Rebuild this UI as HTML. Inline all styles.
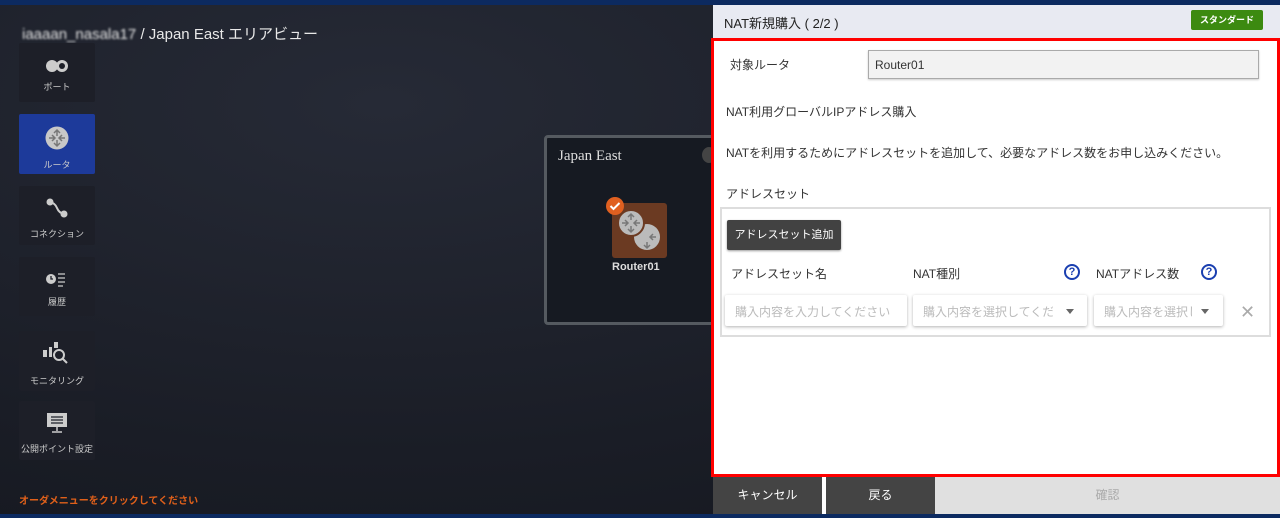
<!DOCTYPE html>
<html><head><meta charset="utf-8"><style>
*{box-sizing:border-box;margin:0;padding:0}
body{width:1280px;height:518px;overflow:hidden;font-family:"Liberation Sans","Noto Sans CJK JP",sans-serif;background:radial-gradient(ellipse at 30% 20%,#262a36,#1a1d26 60%,#13161d);position:relative}
.abs{position:absolute}
.tile{position:absolute;left:19px;width:76px;background:#1d1f28;border-radius:2px;color:#ccc;font-size:9px;text-align:center}
.tile span{position:absolute;left:0;right:0}
.lbl{font-size:12px;color:#333}
.inp{position:absolute;height:31px;background:#fff;box-shadow:0 1px 3px rgba(0,0,0,.3);border-radius:2px;color:#bbb;font-size:12px;padding:8px 10px;white-space:nowrap;overflow:hidden}
.inp i{font-style:normal;display:block;overflow:hidden}
.q{position:absolute;width:16px;height:16px;border:2px solid #1a3fb0;border-radius:50%;color:#1a3fb0;font-size:11px;font-weight:bold;text-align:center;line-height:12px}
.arr{position:absolute;width:0;height:0;border-left:4px solid transparent;border-right:4px solid transparent;border-top:5px solid #666}
</style></head><body>
<div class="abs" style="left:0;top:0;width:1280px;height:5px;background:#0c2a60"></div>
<div class="abs" style="left:0;top:514px;width:1280px;height:4px;background:#0c2a60"></div>
<div class="abs" style="left:22px;top:23px;color:#e8e8e8;font-size:15px;"><span style="filter:blur(1px)">iaaaan_nasala17</span> / Japan East エリアビュー</div>

<div class="tile" style="top:43px;height:59px"><svg class="abs" style="left:26px;top:16px" width="24" height="14"><circle cx="7" cy="7" r="6" fill="#ccc"/><circle cx="17" cy="7" r="6" fill="#ccc"/><circle cx="17" cy="7" r="3" fill="#1d1f28"/></svg><span style="top:37px">ポート</span></div>
<div class="tile" style="top:114px;height:60px;background:#1d3a9a"><svg class="abs" style="left:26px;top:12px" width="24" height="24"><circle cx="12" cy="12" r="11.5" fill="#c8c8c8"/><path d="M12 4v6M9 7l3-3 3 3M12 20v-6M9 17l3 3 3-3M4 12h6M7 9l3 3-3 3M20 12h-6M17 9l-3 3 3 3" stroke="#777" stroke-width="1.5" fill="none"/></svg><span style="top:44px">ルータ</span></div>
<div class="tile" style="top:186px;height:59px"><svg class="abs" style="left:26px;top:11px" width="24" height="22"><path d="M5 5 Q10 6 12 11 Q14 16 19 17" stroke="#ccc" stroke-width="2" fill="none"/><circle cx="5" cy="5" r="3.5" fill="#ccc"/><circle cx="19" cy="17" r="3.5" fill="#ccc"/></svg><span style="top:41px">コネクション</span></div>
<div class="tile" style="top:257px;height:59px"><svg class="abs" style="left:26px;top:14px" width="24" height="18"><circle cx="6" cy="8" r="5" fill="#ccc"/><path d="M6 5v3h2" stroke="#1d1f28" stroke-width="1.3" fill="none"/><path d="M13 3h7M13 7h7M13 11h7M13 15h5" stroke="#ccc" stroke-width="1.2"/></svg><span style="top:38px">履歴</span></div>
<div class="tile" style="top:331px;height:60px"><svg class="abs" style="left:23px;top:9px" width="30" height="26"><rect x="1" y="10" width="4" height="7" fill="#ccc"/><rect x="7" y="7" width="3" height="10" fill="#ccc"/><rect x="12" y="2" width="4" height="6" fill="#ccc"/><circle cx="17" cy="15" r="5" stroke="#ccc" stroke-width="2" fill="none"/><path d="M21 19l4 4" stroke="#ccc" stroke-width="2"/></svg><span style="top:43px">モニタリング</span></div>
<div class="tile" style="top:401px;height:59px"><svg class="abs" style="left:27px;top:11px" width="22" height="22"><rect x="1" y="1" width="20" height="14" fill="#ccc"/><path d="M5 5h12M5 8h12M5 11h12" stroke="#1d1f28" stroke-width="1.2"/><path d="M11 15v4M6 20h10" stroke="#ccc" stroke-width="1.5"/></svg><span style="top:41px">公開ポイント設定</span></div>
<div class="abs" style="left:19px;top:492px;color:#e0601a;font-size:10px;font-weight:bold">オーダメニューをクリックしてください</div>

<div class="abs" style="left:544px;top:135px;width:180px;height:190px;border:3px solid #555a60;border-radius:4px;background:#161a22"></div>
<div class="abs" style="left:558px;top:148px;color:#ddd;font-size:15px;font-family:'Liberation Serif',serif">Japan East</div>
<div class="abs" style="left:702px;top:147px;width:14px;height:16px;border-radius:50%;background:#444"></div>
<div class="abs" style="left:612px;top:203px;width:55px;height:55px;background:#6b3a22;border-radius:3px"></div>
<svg class="abs" style="left:617px;top:208px" width="48" height="48"><circle cx="30" cy="29" r="13" fill="#bbb"/><circle cx="14" cy="15" r="13" fill="#bbb" stroke="#6b3a22" stroke-width="2"/><path d="M14 6v6M11 9l3-3 3 3M14 24v-6M11 21l3 3 3-3M5 15h6M8 12l3 3-3 3M23 15h-6M20 12l-3 3 3 3" stroke="#777" stroke-width="1.5" fill="none"/><path d="M30 34v6M27 37l3 3 3-3M39 29h-6M36 26l-3 3 3 3" stroke="#777" stroke-width="1.5" fill="none"/></svg>
<svg class="abs" style="left:605px;top:196px" width="20" height="20"><circle cx="10" cy="10" r="9" fill="#e06020"/><path d="M5.5 10l3 3 6-6" stroke="#fff" stroke-width="2" fill="none"/></svg>
<div class="abs" style="left:612px;top:261px;color:#ddd;font-size:11px;font-weight:bold">Router01</div>

<div class="abs" style="left:713px;top:5px;width:567px;height:33px;background:#e8eaf2"></div>
<div class="abs" style="left:724px;top:13px;font-size:13px;color:#222">NAT新規購入 ( 2/2 )</div>
<div class="abs" style="left:1191px;top:10px;width:72px;height:20px;background:#3c8a10;border-radius:2px;color:#fff;font-size:9px;font-weight:bold;text-align:center;line-height:20px">スタンダード</div>
<div class="abs" style="left:711px;top:38px;width:569px;height:439px;border:3px solid #f00;background:#fff"></div>
<div class="abs lbl" style="left:730px;top:56px">対象ルータ</div>
<div class="abs" style="left:868px;top:50px;width:391px;height:29px;background:#f2f2f2;border:1px solid #aaa;box-shadow:0 1px 2px rgba(0,0,0,.2);font-size:12px;color:#333;padding:7px 6px">Router01</div>
<div class="abs lbl" style="left:726px;top:103px">NAT利用グローバルIPアドレス購入</div>
<div class="abs lbl" style="left:726px;top:144px">NATを利用するためにアドレスセットを追加して、必要なアドレス数をお申し込みください。</div>
<div class="abs lbl" style="left:726px;top:185px">アドレスセット</div>
<div class="abs" style="left:720px;top:207px;width:551px;height:130px;border:2px solid #ddd"></div>
<div class="abs" style="left:727px;top:220px;width:114px;height:30px;background:#424242;border-radius:2px;box-shadow:0 1px 2px rgba(0,0,0,.4);color:#fff;font-size:11px;line-height:30px;text-align:center">アドレスセット追加</div>
<div class="abs lbl" style="left:731px;top:265px">アドレスセット名</div>
<div class="abs lbl" style="left:913px;top:265px">NAT種別</div>
<div class="q" style="left:1064px;top:264px">?</div>
<div class="abs lbl" style="left:1096px;top:265px">NATアドレス数</div>
<div class="q" style="left:1201px;top:264px">?</div>
<div class="inp" style="left:725px;top:295px;width:182px">購入内容を入力してください</div>
<div class="inp" style="left:913px;top:295px;width:174px"><i style="width:130px">購入内容を選択してください</i></div>
<div class="arr" style="left:1066px;top:309px"></div>
<div class="inp" style="left:1094px;top:295px;width:129px"><i style="width:88px">購入内容を選択してください</i></div>
<div class="arr" style="left:1201px;top:309px"></div>
<div class="abs" style="left:1240px;top:302px;color:#aaa;font-size:18px">✕</div>

<div class="abs" style="left:713px;top:477px;width:109px;height:37px;background:#444;color:#fff;font-size:12px;text-align:center;line-height:37px">キャンセル</div>
<div class="abs" style="left:822px;top:477px;width:4px;height:37px;background:#fff"></div>
<div class="abs" style="left:826px;top:477px;width:109px;height:37px;background:#444;color:#fff;font-size:12px;text-align:center;line-height:37px">戻る</div>
<div class="abs" style="left:935px;top:477px;width:345px;height:37px;background:#e0e0e0;color:#aaa;font-size:12px;text-align:center;line-height:37px">確認</div>
</body></html>
